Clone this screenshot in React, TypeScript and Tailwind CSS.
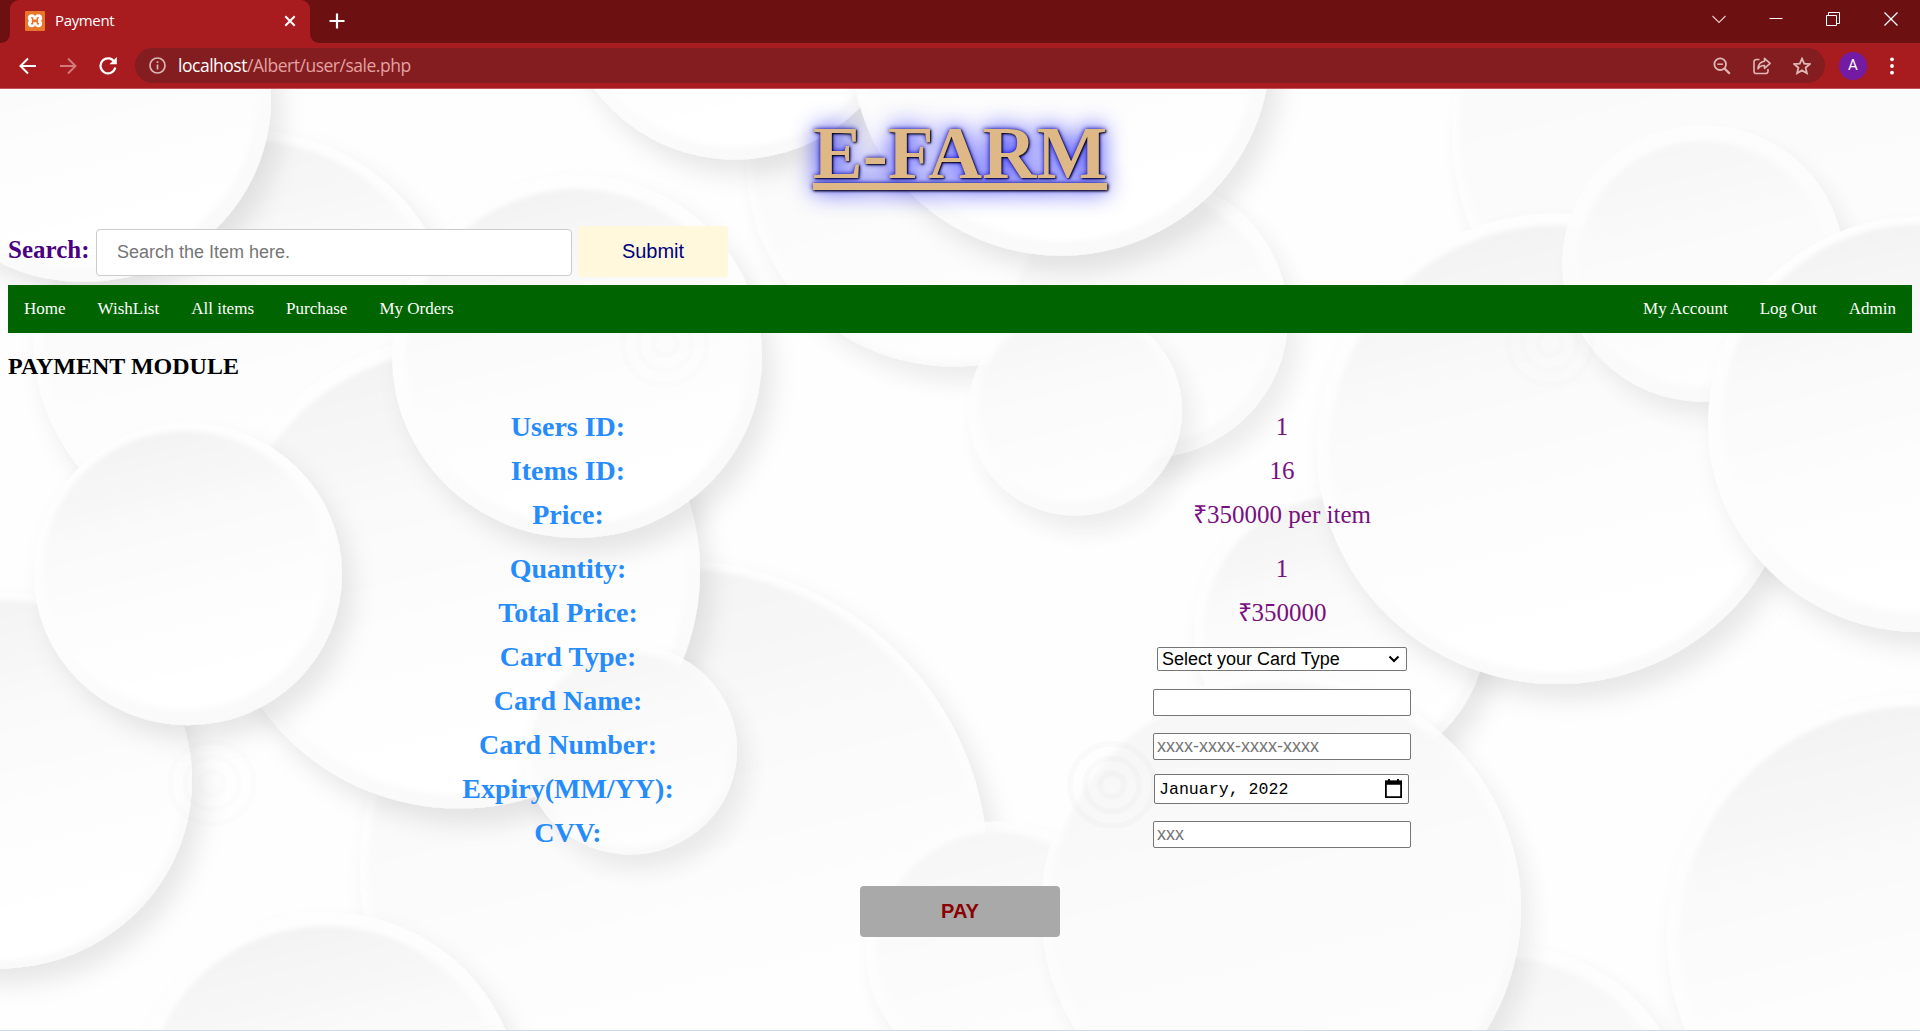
import type { ReactNode } from "react";

type Disc = { x: number; y: number; r: number; ix?: number; iy?: number; ir: number; soft?: boolean };

// Paper discs, listed back to front; the inner circle carries the shading.
const discs: Disc[] = [
  { x: 953, y: 165, r: 206, ir: 200, soft: true },
  { x: 245, y: 342, r: 212, ir: 202 },
  { x: 1720, y: 130, r: 268, ix: 1715, ir: 256, soft: true },
  { x: 1340, y: 640, r: 146, ir: 136 },
  { x: 674, y: 883, r: 314, ir: 306 },
  { x: 1500, y: 1150, r: 190, ir: 176, soft: true },
  { x: 1144, y: 321, r: 144, ir: 130, soft: true },
  { x: 1075, y: 416, r: 107, iy: 412, ir: 97, soft: true },
  { x: 735, y: -13, r: 173, ir: 160 },
  { x: 1061, y: 49, r: 209, ir: 194 },
  { x: 84, y: 98, r: 187, ir: 172 },
  { x: 0, y: 793, r: 192, ir: 184 },
  { x: 459, y: 581, r: 241, ir: 227 },
  { x: 577, y: 361, r: 185, ir: 171 },
  { x: 188, y: 583, r: 154, ix: 185, iy: 579, ir: 142 },
  { x: 630, y: 762, r: 107, ir: 99, soft: true },
  { x: 326, y: 1122, r: 194, ir: 180 },
  { x: 998, y: 967, r: 132, ir: 121, soft: true },
  { x: 1281, y: 924, r: 240, ir: 231, soft: true },
  { x: 1557, y: 455, r: 240, ir: 228 },
  { x: 1703, y: 266, r: 141, ir: 125, soft: true },
  { x: 1920, y: 430, r: 212, iy: 424, ir: 198 },
  { x: 1915, y: 954, r: 248, ir: 236 },
];

const rings = [
  [1112, 798],
  [212, 796],
  [1550, 348],
  [665, 348],
];

function PaperBackground() {
  return (
    <svg className="absolute inset-0 h-full w-full" viewBox="0 88 1920 960" preserveAspectRatio="none" aria-hidden="true">
      <defs>
        <linearGradient id="face" x1="0.3" y1="0" x2="0.55" y2="1">
          <stop offset="0" stopColor="#f2f2f2" />
          <stop offset="0.3" stopColor="#f9f9f9" />
          <stop offset="0.6" stopColor="#fdfdfd" />
          <stop offset="1" stopColor="#ffffff" />
        </linearGradient>
        <linearGradient id="faceSoft" x1="0.3" y1="0" x2="0.55" y2="1">
          <stop offset="0" stopColor="#f6f6f6" />
          <stop offset="0.5" stopColor="#fbfbfb" />
          <stop offset="1" stopColor="#fefefe" />
        </linearGradient>
        <linearGradient id="rim" x1="0.2" y1="0" x2="0.7" y2="1">
          <stop offset="0" stopColor="#fefefe" />
          <stop offset="0.5" stopColor="#fdfdfd" />
          <stop offset="1" stopColor="#f9f9f9" />
        </linearGradient>
        <filter id="shade" x="-20%" y="-20%" width="150%" height="150%">
          <feDropShadow dx="11" dy="16" stdDeviation="12" floodColor="#000" floodOpacity="0.09" />
        </filter>
        <filter id="edge" x="-10%" y="-10%" width="120%" height="120%">
          <feGaussianBlur stdDeviation="2.5" />
        </filter>
      </defs>
      <rect x="0" y="88" width="1920" height="960" fill="#fefefe" />
      {discs.map((d, i) => (
        <g key={i}>
          <circle cx={d.x} cy={d.y} r={d.r} fill="url(#rim)" filter="url(#shade)" opacity={d.soft ? 0.8 : 1} />
          <circle
            cx={d.ix ?? d.x}
            cy={d.iy ?? d.y}
            r={d.ir}
            fill={d.soft ? "url(#faceSoft)" : "url(#face)"}
            filter="url(#edge)"
          />
        </g>
      ))}
      {rings.map(([x, y], i) => (
        <g key={i} fill="none" stroke="#000" strokeOpacity={i === 0 ? 0.014 : 0.006} strokeWidth="6">
          <circle cx={x} cy={y} r="12" />
          <circle cx={x} cy={y} r="27" />
          <circle cx={x} cy={y} r="42" />
        </g>
      ))}
    </svg>
  );
}

function XamppIcon() {
  return (
    <svg className="h-5 w-5" viewBox="0 0 20 20">
      <rect width="20" height="20" rx="1" fill="#e8772c" />
      <g fill="#fff">
        <circle cx="6.600" cy="7" r="3.700" />
        <circle cx="13.400" cy="7" r="3.700" />
        <circle cx="6.600" cy="12.600" r="3.700" />
        <circle cx="13.400" cy="12.600" r="3.700" />
        <rect x="5.500" y="6" width="9" height="8" />
      </g>
      <path d="M6 6.900h1.600v2.200h4.800V6.900H14M6 12.700h1.600v-2.200h4.800v2.200H14" fill="none" stroke="#e8772c" strokeWidth="1.400" />
    </svg>
  );
}

function BrowserChrome() {
  return (
    <header className="h-[89px] w-full border-b border-[#c4565a] bg-[#a81c1f] font-['Open_Sans','Noto_Sans',sans-serif]">
      <div className="flex h-[43px] bg-[#6c1012]">
        <div className="flex w-[10px] bg-[#a81c1f]">
          <div className="w-full rounded-br-[9px] bg-[#6c1012]" />
        </div>
        <div className="flex h-[43px] w-[300px] items-center rounded-t-[9px] bg-[#a81c1f] pr-[13px] pb-px pl-[15px]">
          <XamppIcon />
          <span className="ml-[10px] flex-1 pb-px text-[15px] tracking-[-0.35px] text-white">Payment</span>
          <svg className="h-[14px] w-[14px]" viewBox="0 0 14 14" stroke="#fff" strokeWidth="2" fill="none">
            <path d="M2.300 2.300l9.400 9.400M11.700 2.300L2.300 11.700" />
          </svg>
        </div>
        <div className="flex w-[10px] bg-[#a81c1f]">
          <div className="w-full rounded-bl-[9px] bg-[#6c1012]" />
        </div>
        <svg className="mt-[13px] ml-[9px] h-4 w-4" viewBox="0 0 16 16" stroke="#fff" strokeWidth="2.200">
          <path d="M8 0.500v15M0.500 8h15" />
        </svg>
        <div className="flex-1" />
        <div className="flex h-[37px] items-center">
          <svg className="h-[14px] w-[14px]" viewBox="0 0 14 14" fill="none" stroke="#e9cdcd" strokeWidth="1.100">
            <path d="M0.500 4l6.500 6.500L13.500 4" />
          </svg>
          <svg className="ml-[43px] h-[14px] w-[14px]" viewBox="0 0 14 14" stroke="#fff">
            <path d="M0.500 6.500h13" />
          </svg>
          <svg className="ml-[43px] h-[14px] w-[14px]" viewBox="0 0 14 14" fill="none" stroke="#fff">
            <path d="M0.500 3.500h10v10H0.500zM2.500 3V0.500h11v11H11" />
          </svg>
          <svg className="mr-[22px] ml-[44px] h-[14px] w-[14px]" viewBox="0 0 14 14" stroke="#fff" strokeWidth="1.300">
            <path d="M0.500 0.500l13 13M13.500 0.500l-13 13" />
          </svg>
        </div>
      </div>
      <div className="flex h-[45px] items-center pl-[19px]">
        <svg className="h-[18px] w-[18px]" viewBox="0 0 18 18" fill="none" stroke="#fff" strokeWidth="2">
          <path d="M17 9H2M9 1.500L1.500 9 9 16.500" />
        </svg>
        <svg className="ml-[22px] h-[18px] w-[18px]" viewBox="0 0 18 18" fill="none" stroke="#d27a7c" strokeWidth="2">
          <path d="M1 9h15M9 1.500L16.500 9 9 16.500" />
        </svg>
        <svg className="ml-[22px] h-[18px] w-[18px]" viewBox="0 0 18 18" fill="none" stroke="#fff" strokeWidth="2.200">
          <path d="M15.700 5.500A7.500 7.500 0 1 0 16.300 10.500" />
          <path d="M17.800 0v7.300h-7.300z" fill="#fff" stroke="none" />
        </svg>
        <div className="ml-[18px] flex h-[35px] w-[1690px] items-center rounded-full bg-[#831d1f] pr-[14px] pl-[14px]">
          <svg className="h-[17px] w-[17px]" viewBox="0 0 17 17" fill="none" stroke="#d9b5b5" strokeWidth="1.700">
            <circle cx="8.500" cy="8.500" r="7.500" />
            <path d="M8.500 7.500v5M8.500 4.200v1.800" />
          </svg>
          <span className="ml-[12px] flex-1 text-[17.5px] leading-[35px] tracking-[-0.48px] text-[#e3a1a2]">
            <span className="text-white">localhost</span>/Albert/user/sale.php
          </span>
          <svg className="h-[18px] w-[18px]" viewBox="0 0 18 18" fill="none" stroke="#dfb7b7" strokeWidth="1.800">
            <circle cx="7.200" cy="7.200" r="5.800" />
            <path d="M4.300 7.200h5.800" strokeWidth="1.500" />
            <path d="M11.500 11.500l5.300 5.300" strokeWidth="2.300" />
          </svg>
          <svg className="ml-[22px] h-[18px] w-[18px]" viewBox="0 0 18 18" fill="none" stroke="#dfb7b7" strokeWidth="1.600" strokeLinejoin="round">
            <path d="M6.500 2.500H3.300A2.300 2.300 0 0 0 1 4.800v9.400a2.300 2.300 0 0 0 2.300 2.300h9.400a2.300 2.300 0 0 0 2.300-2.300V12" />
            <path d="M11.500 1.300l5.600 5-5.600 5V8.500C8.300 8.400 6.300 9.500 5 11.800 5.300 7.600 7.500 4.700 11.500 4.200z" />
          </svg>
          <svg className="ml-[22px] h-[18px] w-[18px]" viewBox="0 0 18 18" fill="none" stroke="#dfb7b7" strokeWidth="1.800">
            <path d="M9 1.600l2.200 5 5.600.5-4.200 3.600 1.300 5.500L9 13.400 4.100 16.200l1.300-5.500L1.200 7.100l5.600-.5z" />
          </svg>
        </div>
        <div className="ml-[14px] flex h-7 w-7 items-center justify-center rounded-full bg-[#741ba3] font-[Roboto,sans-serif] text-[15px] leading-none text-white">
          A
        </div>
        <svg className="ml-[22px] h-[18px] w-[6px]" viewBox="0 0 6 18" fill="#fff">
          <circle cx="3" cy="2.300" r="1.900" />
          <circle cx="3" cy="9" r="1.900" />
          <circle cx="3" cy="15.700" r="1.900" />
        </svg>
      </div>
    </header>
  );
}

function Row({ label, children, tall }: { label: string; children: ReactNode; tall?: boolean }) {
  return (
    <div className={tall ? "grid h-[54px] grid-cols-2 items-start" : "grid h-[44px] grid-cols-2 items-start"}>
      <div className="text-center text-[28px] leading-[44px] font-bold text-[#268bfb]">{label}</div>
      <div className="flex h-[44px] items-center justify-center text-[25px] leading-[44px] text-[#7a0f7e]">{children}</div>
    </div>
  );
}

const fieldClass =
  "mt-[3px] h-[27px] w-[258px] rounded-[2px] border border-[#767676] bg-white px-[3px] font-['Liberation_Sans',Arial,sans-serif] text-[18px] leading-none text-black placeholder:text-[#757575] placeholder:opacity-100 outline-none";

export default function App() {
  return (
    <div className="flex h-[1031px] w-[1920px] flex-col overflow-hidden bg-white">
      <BrowserChrome />
      <main className="relative flex-1 overflow-hidden border-b border-[#c9dbe6] font-['Liberation_Serif','Times_New_Roman',serif]">
        <PaperBackground />
        <div className="relative px-2">
          <h1 className="h-[136px] pt-[21px] text-center text-[75px] leading-[86px] font-bold text-[#deb887] underline decoration-[7px] underline-offset-[5px] [text-decoration-skip-ink:none] [text-shadow:1px_1px_2px_black,0_0_25px_blue,0_0_5px_darkblue]">
            E-FARM
          </h1>
          <div className="flex h-[60px] items-start">
            <label className="w-[88px] text-[25px] leading-[50px] font-bold text-[#4b0082]">Search:</label>
            <input
              className="mt-[4px] h-[47px] w-[476px] rounded-[4px] border border-[#ccc] bg-white px-5 font-['Liberation_Sans',Arial,sans-serif] text-[18px] text-black placeholder:text-[#757575] placeholder:opacity-100"
              placeholder="Search the Item here."
            />
            <button className="mt-px ml-[6px] h-[51px] w-[150px] rounded-[4px] bg-[#fff8dc] pb-px font-['Liberation_Sans',Arial,sans-serif] text-[20px] text-[#000080]">
              Submit
            </button>
          </div>
          <nav className="flex h-12 items-center justify-between bg-[#006400] px-4 pb-px text-[17px] leading-none text-white">
            <div className="flex gap-8">
              <a>Home</a>
              <a>WishList</a>
              <a>All items</a>
              <a>Purchase</a>
              <a>My Orders</a>
            </div>
            <div className="flex gap-8">
              <a>My Account</a>
              <a>Log Out</a>
              <a>Admin</a>
            </div>
          </nav>
          <h2 className="mt-[20px] h-[52px] text-[24px] leading-[27px] font-bold text-black">PAYMENT MODULE</h2>
          <form className="ml-[203px] w-[1428px]">
            <Row label="Users ID:">1</Row>
            <Row label="Items ID:">16</Row>
            <Row label="Price:" tall>
              ₹350000 per item
            </Row>
            <Row label="Quantity:">1</Row>
            <Row label="Total Price:">₹350000</Row>
            <Row label="Card Type:">
              <div className="mt-[4px] flex h-6 w-[250px] items-center justify-between rounded-[2px] border border-[#767676] bg-white pr-[6px] pl-[4px] font-['Liberation_Sans',Arial,sans-serif] text-[18px] leading-none text-black">
                <span>Select your Card Type</span>
                <svg className="h-[12px] w-[12px]" viewBox="0 0 12 12" fill="none" stroke="#000" strokeWidth="2">
                  <path d="M1.500 3.500L6 8l4.500-4.500" />
                </svg>
              </div>
            </Row>
            <Row label="Card Name:">
              <input className={fieldClass} />
            </Row>
            <Row label="Card Number:">
              <input className={fieldClass} placeholder="xxxx-xxxx-xxxx-xxxx" />
            </Row>
            <Row label="Expiry(MM/YY):">
              <div className="mr-px flex h-[30px] w-[255px] items-center justify-between rounded-[2px] border border-[#767676] bg-white pr-[6px] pl-[4px] font-['Liberation_Mono',monospace] text-[16.6px] leading-none text-black">
                <span className="pt-[2px]">January, 2022</span>
                <svg className="mb-px h-[19px] w-[17px]" viewBox="0 0 17 19" fill="none" stroke="#000" strokeWidth="1.800">
                  <path d="M0.900 2.500h15.200v15.600H0.900z" />
                  <path d="M0 1.800h17v4H0zM3 0h2v3H3zM12 0h2v3h-2z" fill="#000" stroke="none" />
                </svg>
              </div>
            </Row>
            <Row label="CVV:">
              <input className={fieldClass} placeholder="xxx" />
            </Row>
          </form>
          <div className="mt-[31px] flex justify-center">
            <button className="h-[51px] w-[200px] rounded-[4px] bg-[#a9a9a9] pb-[2px] font-['Liberation_Sans',Arial,sans-serif] text-[20px] font-bold text-[#8b0000]">
              PAY
            </button>
          </div>
        </div>
      </main>
    </div>
  );
}
